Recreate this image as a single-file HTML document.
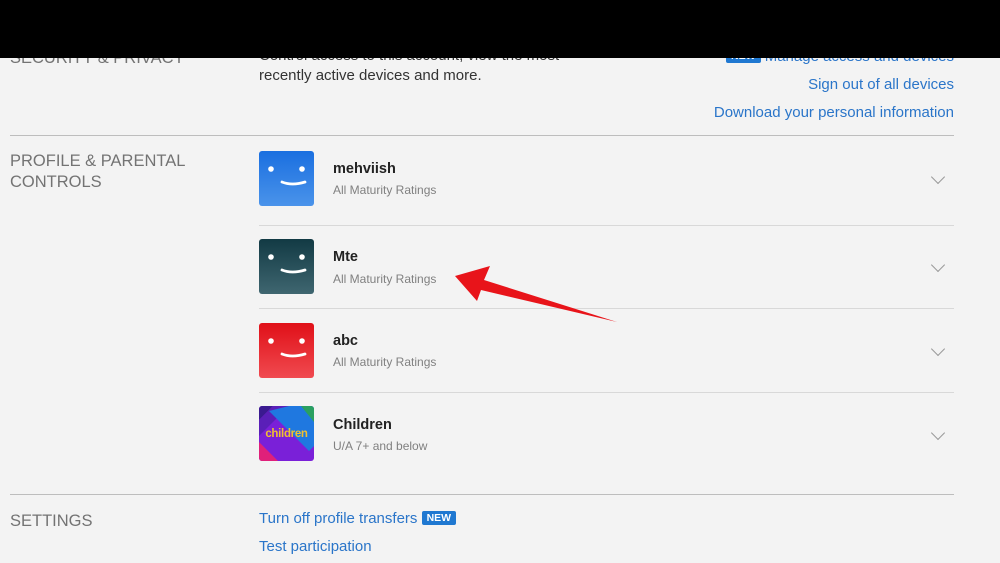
<html><head><style>
body{margin:0;width:1000px;height:563px;background:#f3f3f3;font-family:"Liberation Sans",sans-serif;position:relative;overflow:hidden}
.a{position:absolute;white-space:nowrap}
.hd{color:#737373;font-size:16.5px;line-height:21px}
.lk{color:#2a75c9;font-size:15px}
.hr{position:absolute;left:10px;width:944px;height:1px;background:#bdbdbd}
.sr{position:absolute;left:259px;width:695px;height:1px;background:#d8d8d8}
.av{position:absolute;left:259px;width:55px;height:55px;border-radius:3px;overflow:hidden}
.nm{color:#222;font-size:14.5px;font-weight:bold}
.sb{color:#808080;font-size:12px}
.ch{position:absolute;left:933px;width:9px;height:9px;border-right:1.3px solid #999;border-bottom:1.3px solid #999;transform:rotate(45deg)}
.new{display:inline-block;background:#1f78d1;color:#fff;font-size:10.5px;font-weight:bold;padding:1px 5px;border-radius:2px;vertical-align:2px}
</style></head><body>
<div class="a hd" style="left:10px;top:48px">SECURITY &amp; PRIVACY</div>
<div class="a" style="left:259px;top:46px;color:#333;font-size:15px;line-height:20px">Control access to this account, view the most<br>recently active devices and more.</div>
<div class="a lk" style="right:46px;top:48px"><span class="new">NEW</span> Manage access and devices</div>
<div class="a lk" style="right:46px;top:76px">Sign out of all devices</div>
<div class="a lk" style="right:46px;top:104px">Download your personal information</div>
<div style="position:absolute;left:0;top:0;width:1000px;height:58px;background:#000"></div>
<div class="hr" style="top:135px"></div>
<div class="a hd" style="left:10px;top:151px">PROFILE &amp; PARENTAL<br>CONTROLS</div>

<svg class="av" style="top:151px" viewBox="0 0 55 55"><defs><linearGradient id="g1" x1="0" y1="0" x2="0" y2="1"><stop offset="0" stop-color="#1a6fe0"/><stop offset="1" stop-color="#4a93ea"/></linearGradient></defs><rect width="55" height="55" fill="url(#g1)"/><circle cx="12" cy="18" r="2.8" fill="#fff"/><circle cx="43" cy="18" r="2.8" fill="#fff"/><path d="M23 31 Q33 35 46 31" stroke="#fff" stroke-width="2.8" fill="none" stroke-linecap="round"/></svg>
<div class="a nm" style="left:333px;top:161px">mehviish</div><div class="a sb" style="left:333px;top:183px">All Maturity Ratings</div><div class="ch" style="top:172px"></div>
<div class="sr" style="top:225px"></div>

<svg class="av" style="top:239px" viewBox="0 0 55 55"><defs><linearGradient id="g2" x1="0" y1="0" x2="0" y2="1"><stop offset="0" stop-color="#123a44"/><stop offset="1" stop-color="#3f6670"/></linearGradient></defs><rect width="55" height="55" fill="url(#g2)"/><circle cx="12" cy="18" r="2.8" fill="#fff"/><circle cx="43" cy="18" r="2.8" fill="#fff"/><path d="M23 31 Q33 35 46 31" stroke="#fff" stroke-width="2.8" fill="none" stroke-linecap="round"/></svg>
<div class="a nm" style="left:333px;top:249px">Mte</div><div class="a sb" style="left:333px;top:272px">All Maturity Ratings</div><div class="ch" style="top:260px"></div>
<div class="sr" style="top:308px"></div>

<svg class="av" style="top:323px" viewBox="0 0 55 55"><defs><linearGradient id="g3" x1="0" y1="0" x2="0" y2="1"><stop offset="0" stop-color="#e01018"/><stop offset="1" stop-color="#f04a50"/></linearGradient></defs><rect width="55" height="55" fill="url(#g3)"/><circle cx="12" cy="18" r="2.8" fill="#fff"/><circle cx="43" cy="18" r="2.8" fill="#fff"/><path d="M23 31 Q33 35 46 31" stroke="#fff" stroke-width="2.8" fill="none" stroke-linecap="round"/></svg>
<div class="a nm" style="left:333px;top:333px">abc</div><div class="a sb" style="left:333px;top:355px">All Maturity Ratings</div><div class="ch" style="top:344px"></div>
<div class="sr" style="top:392px"></div>

<svg class="av" style="top:406px" viewBox="0 0 55 55"><rect width="55" height="55" fill="#7a20d8"/><polygon points="0,0 14,0 0,14" fill="#3a1a90"/><polygon points="14,0 30,0 0,30 0,14" fill="#5a1fb8"/><polygon points="30,0 55,0 55,40 50,45 10,5" fill="#1f78e0"/><polygon points="42,0 55,0 55,16" fill="#2aa060"/><polygon points="0,36 0,55 19,55" fill="#e0207a"/><text x="27.5" y="31" font-size="11.5" font-weight="bold" fill="#f0c030" text-anchor="middle" font-family="Liberation Sans" letter-spacing="-0.3">children</text></svg>
<div class="a nm" style="left:333px;top:417px">Children</div><div class="a sb" style="left:333px;top:439px">U/A 7+ and below</div><div class="ch" style="top:428px"></div>

<div class="hr" style="top:494px"></div>
<div class="a hd" style="left:10px;top:511px">SETTINGS</div>
<div class="a lk" style="left:259px;top:510px">Turn off profile transfers <span class="new">NEW</span></div>
<div class="a lk" style="left:259px;top:538px">Test participation</div>

<svg style="position:absolute;left:0;top:0" width="1000" height="563"><polygon points="455,276 490,266 484,280 617,322 481,290 477,301" fill="#e8141a"/></svg>
</body></html>
